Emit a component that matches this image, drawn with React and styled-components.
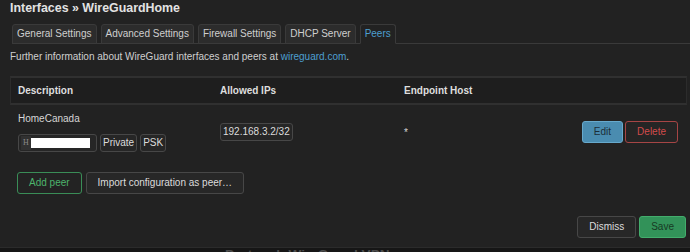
import React from 'react';
import styled, { createGlobalStyle } from 'styled-components';

const GlobalStyle = createGlobalStyle`
  html, body {
    margin: 0;
    padding: 0;
    background: #161616;
    overflow: hidden;
  }
  body {
    font-family: "Liberation Sans", Arial, sans-serif;
    font-size: 10px;
    color: #d6d6d6;
  }
`;

const Modal = styled.div`
  height: 247px;
  box-sizing: border-box;
  padding: 0 3px 0 10px;
  background: #222222;
  display: flex;
  flex-direction: column;
`;

const Title = styled.h4`
  margin: 0;
  font-size: 12.4px;
  line-height: 16px;
  font-weight: bold;
  color: #e2e2e2;
`;

const Tabs = styled.ul`
  list-style: none;
  display: flex;
  gap: 4px;
  margin: 8px -3px 0 2px;
  padding: 0;
  border-bottom: 1px solid #3a3a3a;
`;

const Tab = styled.li`
  height: 20px;
  box-sizing: border-box;
  margin-bottom: -1px;
  padding: 0 4px;
  line-height: 18px;
  border: 1px solid #3a3a3a;
  border-bottom-color: ${p => (p.$active ? '#222222' : '#3a3a3a')};
  border-radius: 3px 3px 0 0;
  background: ${p => (p.$active ? '#222222' : '#2c2c2c')};
  color: ${p => (p.$active ? '#4d9fd0' : '#cfcfcf')};
`;

const Intro = styled.p`
  margin: 6px 0 0;
  line-height: 14px;
  color: #cfcfcf;
`;

const Link = styled.a`
  color: #4d9fd0;
  text-decoration: none;
`;

const Table = styled.div`
  margin-top: 12px;
`;

const columns = `202px 184px 1fr auto`;

const HeadRow = styled.div`
  display: grid;
  grid-template-columns: ${columns};
  background: #1e1e1e;
  border-top: 2px solid #303030;
  border-bottom: 2px solid #303030;
  border-left: 1px solid #2c2c2c;
  border-right: 1px solid #2c2c2c;
  line-height: 25px;
  font-weight: bold;
  color: #dedede;
`;

const HeadCell = styled.div`
  padding: 0 7px;
`;

const Row = styled.div`
  display: grid;
  grid-template-columns: ${columns};
  align-items: center;
  padding: 7px 1px 8px;
`;

const Cell = styled.div`
  padding: ${p => (p.$actions ? '0 8px 0 7px' : '0 7px')};
  display: ${p => (p.$actions ? 'flex' : 'block')};
  gap: 2px;
`;

const Name = styled.div`
  line-height: 14px;
  color: #d6d6d6;
`;

const Badges = styled.div`
  display: flex;
  gap: 3px;
  margin-top: 8px;
`;

const Badge = styled.span`
  display: inline-flex;
  align-items: center;
  height: 18px;
  box-sizing: border-box;
  padding: 0 2px;
  border: 1px solid #474747;
  border-radius: 3px;
  background: #262626;
  line-height: 16px;
  color: #dcdcdc;
`;

const KeyBadge = styled(Badge)`
  padding: 0 6px 0 2px;
`;

const KeyPrefix = styled.span`
  width: 10px;
  height: 14px;
  background: #313131;
  color: #8a8a8a;
  font-family: "Liberation Serif", serif;
  font-size: 8px;
  line-height: 14px;
  text-align: center;
`;

const Redacted = styled.span`
  width: 59px;
  height: 10px;
  background: #ffffff;
`;

const Star = styled.span`
  color: #d6d6d6;
`;

const Button = styled.button`
  height: 22px;
  box-sizing: border-box;
  padding: 0 11px;
  border-radius: 3px;
  font-family: inherit;
  font-size: 10px;
  line-height: 20px;
  cursor: pointer;
  border: 1px solid ${p => p.$border};
  background: ${p => p.$bg};
  color: ${p => p.$color};
`;

const variants = {
  neutral: { $bg: '#272727', $border: '#474747', $color: '#dcdcdc' },
  edit: { $bg: '#4a8cb0', $border: '#67a9cc', $color: '#1c2e39' },
  remove: { $bg: '#252525', $border: '#a64545', $color: '#d24b4b' },
  add: { $bg: '#232323', $border: '#3a8d57', $color: '#4db36c' },
  save: { $bg: '#329259', $border: '#43ad6c', $color: '#173a24' },
};

const CreateRow = styled.div`
  display: flex;
  gap: 4px;
  margin-top: 12px;
  padding-left: 7px;
`;

const Footer = styled.div`
  display: flex;
  justify-content: flex-end;
  gap: 3px;
  margin-top: 22px;
  margin-right: 1px;
`;

const Behind = styled.div`
  height: 5px;
  overflow: hidden;
  border-top: 1px solid #2b2b2b;
  background: #161616;
  padding-left: 225px;
`;

const BehindHeading = styled.div`
  margin-top: -1px;
  font-size: 13.6px;
  font-weight: bold;
  line-height: 16px;
  color: #4c4c4c;
`;

export default function App() {
  return (
    <>
      <GlobalStyle />
      <Modal>
        <Title>Interfaces » WireGuardHome</Title>
        <Tabs>
          <Tab>General Settings</Tab>
          <Tab>Advanced Settings</Tab>
          <Tab>Firewall Settings</Tab>
          <Tab>DHCP Server</Tab>
          <Tab $active>Peers</Tab>
        </Tabs>
        <Intro>
          Further information about WireGuard interfaces and peers at{' '}
          <Link href="#">wireguard.com</Link>.
        </Intro>
        <Table>
          <HeadRow>
            <HeadCell>Description</HeadCell>
            <HeadCell>Allowed IPs</HeadCell>
            <HeadCell>Endpoint Host</HeadCell>
            <HeadCell />
          </HeadRow>
          <Row>
            <Cell>
              <Name>HomeCanada</Name>
              <Badges>
                <KeyBadge>
                  <KeyPrefix>H</KeyPrefix>
                  <Redacted />
                </KeyBadge>
                <Badge>Private</Badge>
                <Badge>PSK</Badge>
              </Badges>
            </Cell>
            <Cell>
              <Badge>192.168.3.2/32</Badge>
            </Cell>
            <Cell>
              <Star>*</Star>
            </Cell>
            <Cell $actions>
              <Button {...variants.edit}>Edit</Button>
              <Button {...variants.remove}>Delete</Button>
            </Cell>
          </Row>
        </Table>
        <CreateRow>
          <Button {...variants.add}>Add peer</Button>
          <Button {...variants.neutral}>Import configuration as peer…</Button>
        </CreateRow>
        <Footer>
          <Button {...variants.neutral}>Dismiss</Button>
          <Button {...variants.save}>Save</Button>
        </Footer>
      </Modal>
      <Behind>
        <BehindHeading>Protocol: WireGuard VPN</BehindHeading>
      </Behind>
    </>
  );
}
